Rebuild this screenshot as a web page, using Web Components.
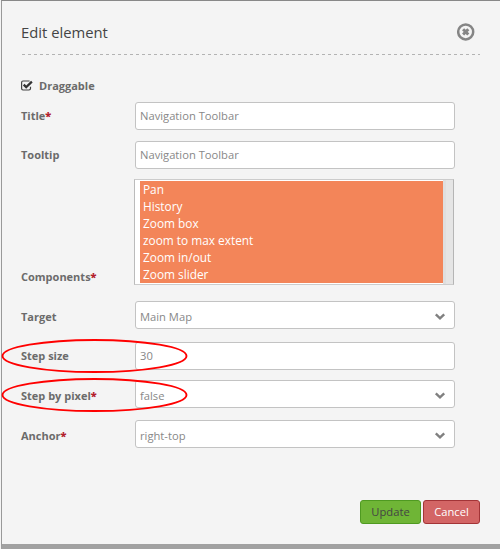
<!DOCTYPE html>
<html lang="en"><head><meta charset="utf-8"><title>Edit element</title>
<style>
html,body{margin:0;height:100%;overflow:hidden;background:#f4f4f4}
body{font-family:"Open Sans","Noto Sans",sans-serif}
</style></head><body>
<edit-dialog heading="Edit element">
  <check-row checked>Draggable</check-row>
  <form-row label="Title" required><text-field>Navigation Toolbar</text-field></form-row>
  <form-row label="Tooltip" style="--gap:11px"><text-field>Navigation Toolbar</text-field></form-row>
  <form-row label="Components" required class="list" style="--gap:10px;--align:flex-end"><list-box items="Pan|History|Zoom box|zoom to max extent|Zoom in/out|Zoom slider"></list-box></form-row>
  <form-row label="Target" style="--gap:16px;--lift:0px;--drop:3px"><text-field dropdown>Main Map</text-field></form-row>
  <form-row label="Step size" marked style="--gap:13px;--mark-top:-3px"><text-field>30</text-field></form-row>
  <form-row label="Step by pixel" required marked style="--gap:10px;--mark-top:-2px;--lift:0px;--drop:3px"><text-field dropdown>false</text-field></form-row>
  <form-row label="Anchor" required style="--gap:12px;--lift:0px;--drop:3px"><text-field dropdown>right-top</text-field></form-row>
  <push-button slot="actions">Update</push-button>
  <push-button slot="actions" kind="danger">Cancel</push-button>
</edit-dialog>
<script>
const define = (name, render) => customElements.define(name, class extends HTMLElement {
  constructor() { super(); this.attachShadow({mode: 'open'}).innerHTML = render(this); }
});
define('edit-dialog', el => `<style>
:host{display:flex;flex-direction:column;box-sizing:border-box;height:549px;margin-left:1px;padding:0 20px 20px 19px;border:1px solid #999;border-top-color:#888;border-right:0;border-bottom:5px solid #a1a1a1;background:#f4f4f4}
header{display:flex;justify-content:space-between;align-items:flex-start;box-sizing:border-box;height:54px;padding:21px 5px 0 0;border-bottom:1px dashed transparent;background:repeating-linear-gradient(90deg,#b3b3b3 0 3px,transparent 3px 6px) 1px 100%/100% 1px no-repeat border-box}
h1{margin:0;font-size:14.8px;line-height:21px;font-weight:400;color:#444}
svg{width:18px;height:18px;margin-top:1px}
main{flex:1;padding-top:23px}
footer{display:flex;justify-content:flex-end;gap:2px}
</style><header><h1>${el.getAttribute('heading')}</h1>
<svg viewBox="0 0 18 18"><circle cx="8.7" cy="8.9" r="7.5" fill="none" stroke="#858585" stroke-width="2.5"/><path d="M6.1 6.3L11.3 11.5M11.3 6.3L6.1 11.5" stroke="#858585" stroke-width="3"/></svg></header>
<main><slot></slot></main><footer><slot name="actions"></slot></footer>`);
define('check-row', () => `<style>
:host{display:flex;align-items:center;gap:6px;height:15px;margin-bottom:9px;font-size:11px;line-height:15px;font-weight:700;color:#6b6b6b}
svg{width:12px;height:11px}
</style><svg viewBox="0 0 12 11"><path d="M9.5 6.8V8.6Q9.5 10 8 10H2Q.6 10 .6 8.6V2.4Q.6 1 2 1H8.6" fill="none" stroke="#444" stroke-width="1.2"/><path d="M2.7 4.6L5.2 7.1L10.9 1.6" fill="none" stroke="#333" stroke-width="2.2"/></svg><slot></slot>`);
define('form-row', el => `<style>
:host{position:relative;display:flex;align-items:var(--align,center);margin-top:var(--gap,0)}
label{flex:0 0 114px;padding-bottom:var(--lift,1px);padding-top:var(--drop,0px);font-size:11px;line-height:15px;font-weight:700;color:#6b6b6b}
b{color:#b3202c}
.mark{position:absolute;left:-21px;top:var(--mark-top);width:188px;height:34px;overflow:visible}
</style><label>${el.getAttribute('label')}${el.hasAttribute('required') ? '<b>*</b>' : ''}</label><slot></slot>
${el.hasAttribute('marked') ? '<svg class="mark" viewBox="0 0 188 34"><ellipse cx="94.5" cy="17" rx="92" ry="16" fill="none" stroke="#f00" stroke-width="1.9"/></svg>' : ''}`);
define('text-field', el => `<style>
:host{display:flex;align-items:center;justify-content:space-between;box-sizing:border-box;width:320px;height:28px;padding:0 8px 0 4px;border:1px solid #c3c3c3;border-radius:3px;background:#fff;font-size:11.2px;line-height:16px;color:#888}
:host([dropdown]) span{padding-top:3px}
svg{width:12px;height:8px;margin-top:4px}
</style><span><slot></slot></span>${el.hasAttribute('dropdown') ? '<svg viewBox="0 0 12 8"><path d="M1.8 1.4L6 5.4L10.2 1.4" fill="none" stroke="#808080" stroke-width="2.4"/></svg>' : ''}`);
define('list-box', el => `<style>
:host{display:flex;box-sizing:border-box;width:320px;height:106px;margin-left:-1px;border:1px solid #ccc;border-left-color:#bbb;border-right-color:#b5b5b5;background:#fff}
ul{list-style:none;flex:1;margin:1px 0 1px 5px;padding:0;background:#f38559}
li{height:17px;padding-left:3px;font-size:11.85px;line-height:17px;color:#fff}
i{width:7px;border-left:3px solid #dfdfdf;background:#e5e5e5}
</style><ul>${el.getAttribute('items').split('|').map(t => `<li>${t}</li>`).join('')}</ul><i></i>`);
define('push-button', el => `<style>
:host{display:flex;align-items:center;justify-content:center;box-sizing:border-box;width:61px;height:24px;border:1px solid #4f9a21;border-radius:3px;background:#6fb536;color:#444;font-size:11.2px;line-height:16px}
:host([kind=danger]){width:57px;border-color:#a33437;background:#d36565;color:#fff}
</style><slot></slot>`);
</script></body></html>
